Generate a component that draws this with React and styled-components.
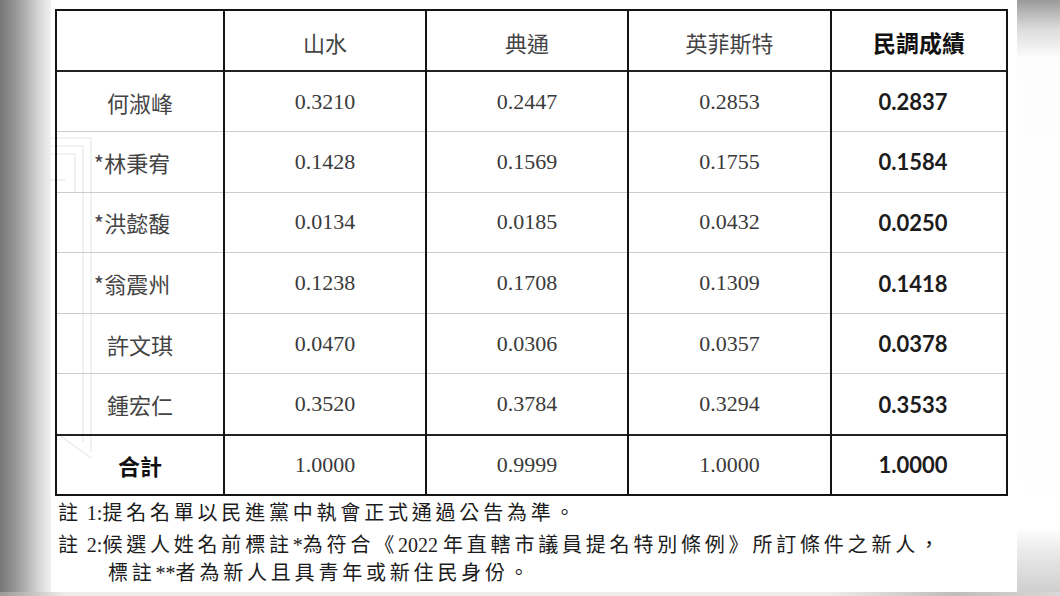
import React from "react";
import styled, { createGlobalStyle } from "styled-components";

const GlobalStyle = createGlobalStyle`
  html, body {
    margin: 0;
    padding: 0;
    background: #fff;
  }
`;

const Screen = styled.div`
  width: 1060px;
  height: 596px;
  overflow: hidden;
  display: flex;
  flex-direction: column;
  background: #fff;
`;

const Band = styled.div`
  display: flex;
  height: 592px;
`;

const LeftEdge = styled.div`
  width: 51px;
  flex-shrink: 0;
  background: linear-gradient(to right, #767676 0%, #9c9c9c 35%, #d4d4d4 75%, #f1f1f1 100%);
`;

const RightEdge = styled.div`
  width: 43px;
  flex-shrink: 0;
  background: linear-gradient(
    to bottom,
    #9a9a9a 0px,
    #dadada 28px,
    #fdfdfd 58px,
    #fff 528px,
    #ebebeb 550px,
    #cfcfcf 100%
  );
`;

const BottomEdge = styled.div`
  height: 4px;
  background: linear-gradient(to right, #9a9a9a 0%, #ececec 6%, #ededed 78%, #bdbdbd 90%, #d9d9d9 100%);
`;

const Paper = styled.div`
  position: relative;
  width: 966px;
  flex-shrink: 0;
  padding: 9px 0 0 4px;
  box-sizing: border-box;
  background: #fff;
`;

const Watermark = styled.svg`
  position: absolute;
  left: 0;
  top: 132px;
  width: 60px;
  height: 330px;
  pointer-events: none;
`;

const Table = styled.table`
  position: relative;
  border-collapse: collapse;
  table-layout: fixed;
  width: 951px;
  border: 2px solid #141414;
`;

const HeadRow = styled.tr`
  height: 61px;
  border-bottom: 2px solid #222;
`;

const BodyRow = styled.tr`
  height: 60.6px;
  border-top: ${(p) => (p.$total ? "2px solid #222" : "1px solid #cdcdcd")};
`;

const Cell = styled.td`
  padding: 0;
  text-align: center;
  vertical-align: middle;
  border-left: 2px solid #141414;
  border-right: 2px solid #141414;
  white-space: nowrap;
`;

const HeadCell = styled(Cell)`
  font-family: "Noto Sans CJK TC", "Noto Sans", sans-serif;
  font-size: ${(p) => (p.$bold ? "23px" : "22px")};
  font-weight: ${(p) => (p.$bold ? 700 : 400)};
  color: ${(p) => (p.$bold ? "#111" : "#444")};
  padding-top: 2px;
`;

const NameCell = styled(Cell)`
  font-family: "Noto Sans CJK TC", "Noto Sans", sans-serif;
  font-size: 22px;
  font-weight: ${(p) => (p.$bold ? 700 : 400)};
  color: ${(p) => (p.$bold ? "#111" : "#444")};
  padding-right: ${(p) => (p.$starred ? "16px" : "0")};
`;

const NumCell = styled(Cell)`
  font-family: "Liberation Serif", "Times New Roman", serif;
  font-size: 22px;
  color: #3a3a3a;
`;

const ScoreCell = styled(Cell)`
  font-family: Lato, "Open Sans", sans-serif;
  font-size: 22px;
  font-weight: 700;
  color: #1c1c1c;
  padding-right: 12px;
`;

const Notes = styled.div`
  padding: 0 0 0 3px;
  font-family: "Liberation Serif", "Noto Sans CJK TC", serif;
  font-size: 20px;
  color: #1c1c1c;
  letter-spacing: 3.8px;
`;

const Note = styled.p`
  margin: 0;
  line-height: ${(p) => (p.$tight ? "28px" : "35px")};
  padding-left: ${(p) => (p.$indent ? "50px" : "0")};
`;

const Latin = styled.span`
  letter-spacing: 0;
`;

const candidates = [
  { name: "何淑峰", a: "0.3210", b: "0.2447", c: "0.2853", score: "0.2837" },
  { name: "*林秉宥", star: true, a: "0.1428", b: "0.1569", c: "0.1755", score: "0.1584" },
  { name: "*洪懿馥", star: true, a: "0.0134", b: "0.0185", c: "0.0432", score: "0.0250" },
  { name: "*翁震州", star: true, a: "0.1238", b: "0.1708", c: "0.1309", score: "0.1418" },
  { name: "許文琪", a: "0.0470", b: "0.0306", c: "0.0357", score: "0.0378" },
  { name: "鍾宏仁", a: "0.3520", b: "0.3784", c: "0.3294", score: "0.3533" },
];

const App = () => {
  return (
    <Screen>
      <GlobalStyle />
      <Band>
        <LeftEdge />
        <Paper>
          <Watermark viewBox="0 0 60 330">
            <g fill="none" stroke="#e4ece4" strokeWidth="1.2">
              <path d="M0 6 H40 V320" />
              <path d="M0 14 H32 V310" />
              <path d="M0 22 H24 V60" />
              <path d="M0 48 H14" />
              <path d="M4 300 L40 326" />
            </g>
          </Watermark>
          <Table>
            <colgroup>
              <col style={{ width: 168 }} />
              <col style={{ width: 202 }} />
              <col style={{ width: 202 }} />
              <col style={{ width: 203 }} />
              <col style={{ width: 176 }} />
            </colgroup>
            <thead>
              <HeadRow>
                <HeadCell />
                <HeadCell>山水</HeadCell>
                <HeadCell>典通</HeadCell>
                <HeadCell>英菲斯特</HeadCell>
                <HeadCell $bold>民調成績</HeadCell>
              </HeadRow>
            </thead>
            <tbody>
              {candidates.map((c) => (
                <BodyRow key={c.name}>
                  <NameCell $starred={c.star}>{c.name}</NameCell>
                  <NumCell>{c.a}</NumCell>
                  <NumCell>{c.b}</NumCell>
                  <NumCell>{c.c}</NumCell>
                  <ScoreCell>{c.score}</ScoreCell>
                </BodyRow>
              ))}
              <BodyRow $total>
                <NameCell $bold>合計</NameCell>
                <NumCell>1.0000</NumCell>
                <NumCell>0.9999</NumCell>
                <NumCell>1.0000</NumCell>
                <ScoreCell>1.0000</ScoreCell>
              </BodyRow>
            </tbody>
          </Table>
          <Notes>
            <Note>
              註<Latin> 1:</Latin>提名名單以民進黨中執會正式通過公告為準。
            </Note>
            <Note $tight>
              註<Latin> 2:</Latin>候選人姓名前標註<Latin>*</Latin>為符合《<Latin>2022 </Latin>
              年直轄市議員提名特別條例》所訂條件之新人，
            </Note>
            <Note $tight $indent>
              標註<Latin>**</Latin>者為新人且具青年或新住民身份。
            </Note>
          </Notes>
        </Paper>
        <RightEdge />
      </Band>
      <BottomEdge />
    </Screen>
  );
};

export default App;
